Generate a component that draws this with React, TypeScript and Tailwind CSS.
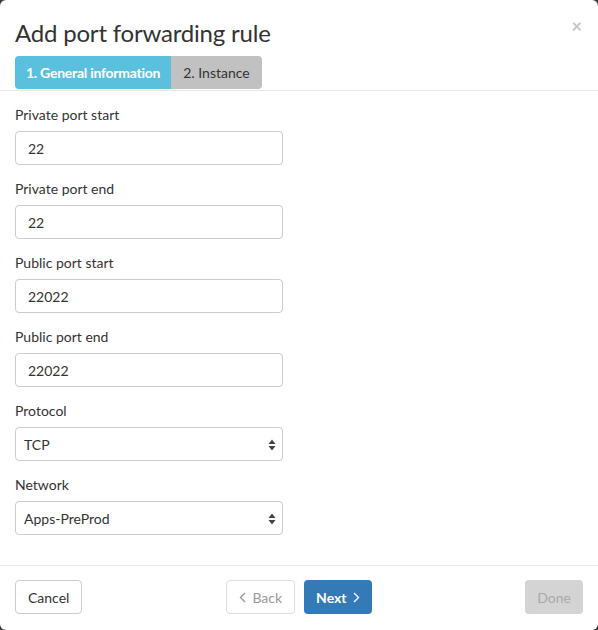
import React from "react";

const fields = [
  { label: "Private port start", value: "22" },
  { label: "Private port end", value: "22" },
  { label: "Public port start", value: "22022" },
  { label: "Public port end", value: "22022" },
];

const selects = [
  { label: "Protocol", value: "TCP" },
  { label: "Network", value: "Apps-PreProd" },
];

const SelectArrows: React.FC = () => (
  <svg width="8" height="12" viewBox="0 0 8 12" className="absolute right-[6px] top-[11px]">
    <path d="M4 0.5 L7.5 5 L0.5 5 Z" fill="#444" />
    <path d="M4 11.5 L7.5 7 L0.5 7 Z" fill="#444" />
  </svg>
);

const App: React.FC = () => {
  return (
    <div className="w-[598px] h-[630px] bg-[#3a3a3a]" style={{ fontFamily: "Lato, 'Liberation Sans', sans-serif" }}>
      <div className="w-full h-full bg-white rounded-[6px] flex flex-col text-[#333]">
        {/* Header */}
        <div className="relative px-[15px] pt-[16px] border-b border-[#e5e5e5]">
          <h1 className="text-[24px] tracking-[-0.2px] leading-[33px] text-[#333]">Add port forwarding rule</h1>
          <button className="absolute right-[16px] top-[17px] text-[#c5c5c5] text-[18px] font-bold leading-none">×</button>
          <div className="flex mt-[7px] mb-[1px]">
            <div className="h-[33px] px-[11px] flex items-center bg-[#5bc0de] text-white text-[14px] font-bold tracking-[-0.25px] rounded-l-[4px]">
              1. General information
            </div>
            <div className="h-[33px] px-[12px] flex items-center bg-[#c1c1c1] text-[#333] text-[14px] rounded-r-[4px]">
              2. Instance
            </div>
          </div>
        </div>

        {/* Body */}
        <div className="flex-1 px-[15px] pt-[14px]">
          {fields.map((f) => (
            <div key={f.label} className="mb-[14px]">
              <label className="block text-[14px] leading-[20px] mb-[6px]">{f.label}</label>
              <input
                readOnly
                value={f.value}
                className="w-[268px] h-[34px] px-[12px] border border-[#ccc] rounded-[4px] text-[14px] text-[#333] outline-none"
              />
            </div>
          ))}
          {selects.map((s) => (
            <div key={s.label} className="mb-[14px]">
              <label className="block text-[14px] leading-[20px] mb-[6px]">{s.label}</label>
              <div className="relative w-[268px] h-[34px] px-[8px] border border-[#ccc] rounded-[4px] text-[14px] flex items-center">
                {s.value}
                <SelectArrows />
              </div>
            </div>
          ))}
        </div>

        {/* Footer */}
        <div className="h-[65px] pb-[2px] border-t border-[#e5e5e5] px-[15px] grid grid-cols-[1fr_auto_1fr] items-center text-[14px]">
          <div>
            <button className="h-[34px] px-[12px] border border-[#ccc] rounded-[4px] bg-white text-[#333]">Cancel</button>
          </div>
          <div className="flex gap-[9px]">
            <button className="h-[34px] px-[12px] border border-[#ddd] rounded-[4px] bg-white text-[#999] flex items-center gap-[6px]">
              <svg width="7" height="11" viewBox="0 0 7 11"><path d="M6 1 L1.5 5.5 L6 10" stroke="#999" strokeWidth="1.4" fill="none" /></svg>
              Back
            </button>
            <button className="h-[34px] px-[12px] rounded-[4px] bg-[#337ab7] text-white font-bold flex items-center gap-[6px]">
              Next
              <svg width="7" height="11" viewBox="0 0 7 11"><path d="M1 1 L5.5 5.5 L1 10" stroke="#fff" strokeWidth="1.4" fill="none" /></svg>
            </button>
          </div>
          <div className="flex justify-end">
            <button className="h-[34px] px-[12px] rounded-[4px] bg-[#d4d4d4] text-[#a9a9a9]">Done</button>
          </div>
        </div>
      </div>
    </div>
  );
};

export default App;
